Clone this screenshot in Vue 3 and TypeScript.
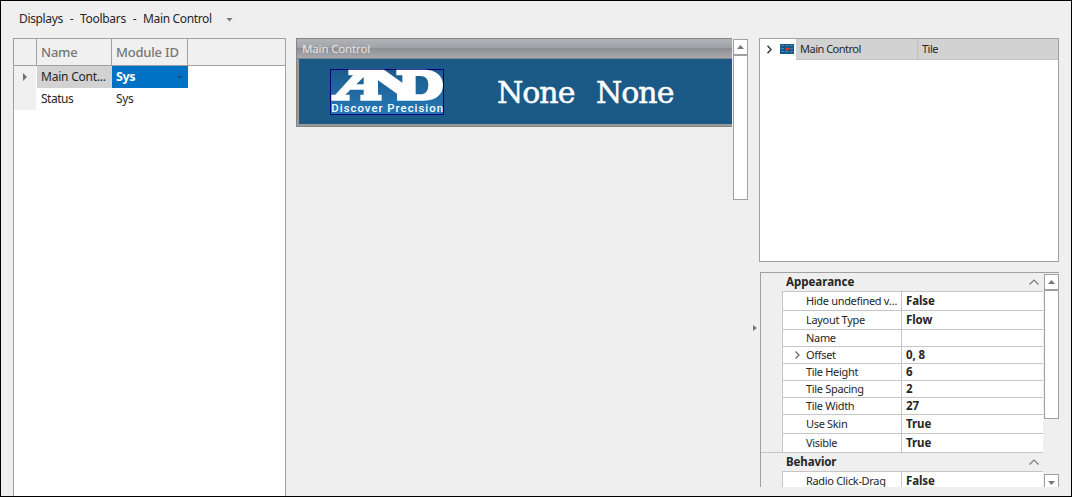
<script setup lang="ts">
interface Property {
  label: string
  value: string
  height: number
  expandable?: boolean
}
interface Category {
  title: string
  rows: Property[]
}

const crumbs: string[] = ['Displays', 'Toolbars', 'Main Control']

const categories: Category[] = [
  {
    title: 'Appearance',
    rows: [
      { label: 'Hide undefined v…', value: 'False', height: 19 },
      { label: 'Layout Type', value: 'Flow', height: 19 },
      { label: 'Name', value: '', height: 17 },
      { label: 'Offset', value: '0, 8', height: 17, expandable: true },
      { label: 'Tile Height', value: '6', height: 17 },
      { label: 'Tile Spacing', value: '2', height: 17 },
      { label: 'Tile Width', value: '27', height: 17 },
      { label: 'Use Skin', value: 'True', height: 19 },
      { label: 'Visible', value: 'True', height: 19 },
    ],
  },
  {
    title: 'Behavior',
    rows: [{ label: 'Radio Click-Drag', value: 'False', height: 18 }],
  },
]
</script>

<template>
  <div class="window">
    <nav class="crumbs">
      <template v-for="(c, i) in crumbs" :key="c">
        <span v-if="i > 0" class="dash">-</span>
        <span :class="'crumb crumb-' + i">{{ c }}</span>
      </template>
      <svg class="crumb-arrow" width="7" height="4" viewBox="0 0 7 4"><path d="M0.5 0h6L3.5 3.5z" fill="#777" /></svg>
    </nav>

    <main class="body">
      <section class="grid-panel">
        <div class="grid-row grid-head">
          <div class="cell gutter"></div>
          <div class="cell"><span class="h-name">Name</span></div>
          <div class="cell"><span class="h-module">Module ID</span></div>
        </div>
        <div class="grid-row">
          <div class="cell gutter">
            <svg width="4" height="8" viewBox="0 0 4 8"><path d="M0 0l4 4-4 4z" fill="#707070" /></svg>
          </div>
          <div class="cell focused-row"><span class="r-main">Main Cont...</span></div>
          <div class="cell selected">
            <b>Sys</b>
            <svg class="drop" width="6" height="3" viewBox="0 0 6 3"><path d="M0 0h6L3 3z" fill="#124f7e" /></svg>
          </div>
        </div>
        <div class="grid-row">
          <div class="cell gutter"></div>
          <div class="cell"><span class="r-status">Status</span></div>
          <div class="cell"><span class="r-sys">Sys</span></div>
        </div>
      </section>

      <section class="preview">
        <div class="tile">
          <div class="tile-title"><span>Main Control</span></div>
          <div class="tile-body">
            <svg class="logo" width="114" height="46" viewBox="0 0 342 138">
              <defs>
                <linearGradient id="logoFill" x1="0" y1="0" x2="0" y2="1">
                  <stop offset="0" stop-color="#1c5b8b" />
                  <stop offset="1" stop-color="#2578b6" />
                </linearGradient>
              </defs>
              <rect x="1.5" y="1.5" width="339" height="135" fill="url(#logoFill)" stroke="#000080" stroke-width="3" />
              <path
                fill="#fff"
                fill-rule="evenodd"
                d="M55 2H162L217 41V19H199V2H283C318 2 339 20 339 48C339 76 318 95 283 95H201V74L144 34V77H155V95H91V77H101V62H61L46 77H59V95H4V77H16L69 19H55ZM79 46H101V24ZM257 21V76H270C287 76 295 66 295 48C295 30 287 21 270 21Z"
              />
              <text class="slogan" x="4" y="129" textLength="335" lengthAdjust="spacing">Discover Precision</text>
            </svg>
            <span class="none first">None</span>
            <span class="none">None</span>
          </div>
        </div>
        <div class="scroll preview-scroll">
          <div class="scroll-btn">
            <svg width="7" height="4" viewBox="0 0 7 4"><path d="M0 4L3.5 0 7 4z" fill="#777" /></svg>
          </div>
          <div class="thumb"></div>
        </div>
      </section>

      <div class="splitter">
        <svg width="4" height="6" viewBox="0 0 4 6"><path d="M0 0l4 3-4 3z" fill="#777" /></svg>
      </div>

      <aside class="side">
        <div class="tree">
          <div class="tree-row">
            <div class="tree-icons">
              <svg width="5" height="9" viewBox="0 0 5 9"><path d="M0.5 0.8L4 4.5 0.5 8.2" fill="none" stroke="#333" stroke-width="1.4" /></svg>
              <svg class="tile-icon" width="14" height="10" viewBox="0 0 14 10">
                <path d="M0 0h14v10H0z" fill="#17598a" />
                <path d="M1 1h3v1H1zM6 1h3v1H6zM10 1h3v1h-3zM1 4h3v1H1zM10 4h3v1h-3zM1 7h3v1H1zM5 7h3v1H5zM10 7h3v1h-3z" fill="#4585b0" />
                <path d="M6 4h3v2h-3z" fill="#f03030" />
              </svg>
            </div>
            <div class="tree-name"><span>Main Control</span></div>
            <div class="tree-type"><span>Tile</span></div>
          </div>
        </div>

        <div class="props">
          <div class="prop-list">
            <template v-for="cat in categories" :key="cat.title">
              <div class="cat">
                <b :class="'cat-' + cat.title.toLowerCase()">{{ cat.title }}</b>
                <svg width="10" height="6" viewBox="0 0 10 6"><path d="M0.5 5.5L5 1l4.5 4.5" fill="none" stroke="#777" stroke-width="1.1" /></svg>
              </div>
              <div v-for="p in cat.rows" :key="p.label" class="prop" :style="{ height: p.height + 'px' }">
                <div class="prop-label">
                  <svg v-if="p.expandable" class="chev" width="5" height="8" viewBox="0 0 5 8"><path d="M0.5 0.5L4 4 0.5 7.5" fill="none" stroke="#666" stroke-width="1.3" /></svg>
                  <span>{{ p.label }}</span>
                </div>
                <div class="prop-value">{{ p.value }}</div>
              </div>
            </template>
          </div>
          <div class="scroll props-scroll">
            <div class="scroll-btn">
              <svg width="7" height="4" viewBox="0 0 7 4"><path d="M0 4L3.5 0 7 4z" fill="#777" /></svg>
            </div>
            <div class="thumb"></div>
            <div class="scroll-btn down">
              <svg width="7" height="4" viewBox="0 0 7 4"><path d="M0 0h7L3.5 4z" fill="#777" /></svg>
            </div>
          </div>
        </div>
      </aside>
    </main>
  </div>
</template>

<style>
body {
  margin: 0;
  overflow: hidden;
}
</style>

<style scoped>
.window {
  box-sizing: border-box;
  width: 1072px;
  height: 497px;
  border: 1px solid #000;
  background: #efefef;
  overflow: hidden;
  display: flex;
  flex-direction: column;
  font-family: "Noto Sans", "Open Sans", sans-serif;
  font-size: 11px;
  color: #262626;
  white-space: nowrap;
}
.window * {
  box-sizing: border-box;
}
svg {
  display: block;
  flex: none;
}
.crumbs {
  height: 37px;
  flex: none;
  display: flex;
  align-items: center;
  padding: 0 0 1px 18px;
  font-size: 12px;
  line-height: 16px;
  letter-spacing: -0.35px;
}
.crumb-0 { width: 44px; }
.crumb-1 { width: 46px; letter-spacing: -0.3px; }
.crumb-2 { width: 69px; }
.dash { width: 17px; text-align: center; }
.crumb-arrow { margin-left: 14px; margin-top: 2px; }

.body {
  display: flex;
  flex: 1;
  min-height: 0;
  padding-left: 12px;
}

.grid-panel {
  width: 273px;
  border: 1px solid #a0a0a0;
  border-bottom: 0;
  background: #fff;
  font-size: 12px;
  letter-spacing: -0.4px;
}
.grid-row {
  display: flex;
  height: 22px;
}
.cell {
  display: flex;
  align-items: center;
  width: 76px;
  padding: 0 0 1px 4px;
}
.cell.gutter {
  width: 22px;
  margin-right: 1px;
  padding: 0 0 0 9px;
  background: #f0f0f0;
}
.grid-head {
  height: 27px;
  background: #f0f0f0;
  border-bottom: 1px solid #a0a0a0;
  color: #777;
  font-size: 13px;
  font-weight: 500;
}
.grid-head .cell {
  border-right: 1px solid #a0a0a0;
  padding: 0 0 1px 4px;
}
.cell:nth-child(2) { width: 75px; }
.grid-head .cell.gutter { width: 23px; margin: 0; }
.h-name { letter-spacing: -0.2px; }
.h-module { letter-spacing: -0.2px; }
.focused-row { background: #d2d2d2; }
.selected {
  background: #0072c6;
  color: #fff;
  font-size: 12.5px;
}
.selected .drop { margin: 1px 5px 0 auto; }
.r-main { letter-spacing: -0.22px; }
.r-status { letter-spacing: -0.5px; }

.preview {
  display: flex;
  width: 452px;
  margin-left: 10px;
}
.tile {
  width: 436px;
  height: 89px;
  border: 1px solid #858688;
  border-right: 0;
}
.tile-title {
  display: flex;
  align-items: center;
  height: 20px;
  padding: 0 0 1px 5px;
  border-bottom: 1px solid #818487;
  background: linear-gradient(#b2b3b7 0, #a1a2a7 9px, #8d8d91 9px, #a9aaae 19px);
  color: #e4e4e4;
  font-size: 11.5px;
  letter-spacing: -0.15px;
}
.tile-body {
  display: flex;
  height: 67px;
  border: 2px solid #9c9696;
  border-top: 0;
  border-right: 0;
  background: #1b5a86;
  padding-left: 31px;
}
.logo { margin-top: 10px; }
.slogan {
  fill: #fff;
  font: 500 34px Roboto, sans-serif;
}
.none {
  width: 99px;
  margin-top: 13px;
  color: #fff;
  font: 30px/42px "DejaVu Serif", serif;
  letter-spacing: -1px;
  -webkit-text-stroke: 0.5px #fff;
}
.none.first { margin-left: 53px; }

.scroll {
  width: 15px;
  display: flex;
  flex-direction: column;
}
.scroll-btn {
  height: 16px;
  flex: none;
  border: 1px solid #a0a0a0;
  background: #fff;
  display: flex;
  align-items: center;
  justify-content: center;
}
.thumb {
  flex: none;
  border: 1px solid #a0a0a0;
  background: #fff;
}
.preview-scroll {
  margin: 1px 0 0 1px;
}
.preview-scroll .thumb { height: 145px; }

.splitter {
  width: 11px;
  padding: 287px 0 0 5px;
}

.side { width: 300px; }
.tree {
  height: 224px;
  border: 1px solid #a0a0a0;
  background: #fff;
}
.tree-row {
  display: flex;
  height: 21px;
}
.tree-icons {
  display: flex;
  align-items: center;
  width: 36px;
  padding: 0 0 1px 7px;
}
.tile-icon { margin-left: 8px; }
.tree-name,
.tree-type {
  display: flex;
  align-items: center;
  background: #d2d2d2;
  border-bottom: 1px solid #c0c0c0;
  padding: 0 0 2px 4px;
  letter-spacing: -0.5px;
}
.tree-name { width: 122px; border-right: 1px solid #c0c0c0; }
.tree-type { flex: 1; }

.props {
  display: flex;
  height: 215px;
  margin: 10px 0 0 1px;
  border: 1px solid #a0a0a0;
  border-right: 0;
  border-bottom: 0;
  overflow: hidden;
}
.prop-list { width: 282px; }
.cat {
  display: flex;
  align-items: center;
  justify-content: space-between;
  height: 18px;
  padding: 0 4px 0 25px;
}
.cat b { font-size: 11.5px; line-height: 14px; }
.cat-behavior { letter-spacing: -0.1px; }
.cat:not(:first-child) { height: 19px; border-top: 1px solid #c6c6c6; }
.prop {
  display: flex;
  margin-left: 21px;
  border-top: 1px solid #c6c6c6;
  border-left: 1px solid #c6c6c6;
  background: #fff;
  line-height: 15px;
}
.prop-label {
  display: flex;
  align-items: center;
  position: relative;
  width: 119px;
  padding: 0 0 1px 23px;
  border-right: 1px solid #c6c6c6;
  letter-spacing: -0.32px;
}
.chev {
  position: absolute;
  left: 12px;
}
.prop-value {
  display: flex;
  align-items: center;
  padding: 0 0 1px 4px;
  font-size: 11.5px;
  letter-spacing: -0.1px;
  font-weight: 700;
}
.props-scroll {
  margin: 1px 0 0 1px;
}
.props-scroll .thumb { height: 129px; }
.props-scroll .down { margin-top: 55px; border-bottom: 0; height: 13px; padding-top: 3px; }
</style>
